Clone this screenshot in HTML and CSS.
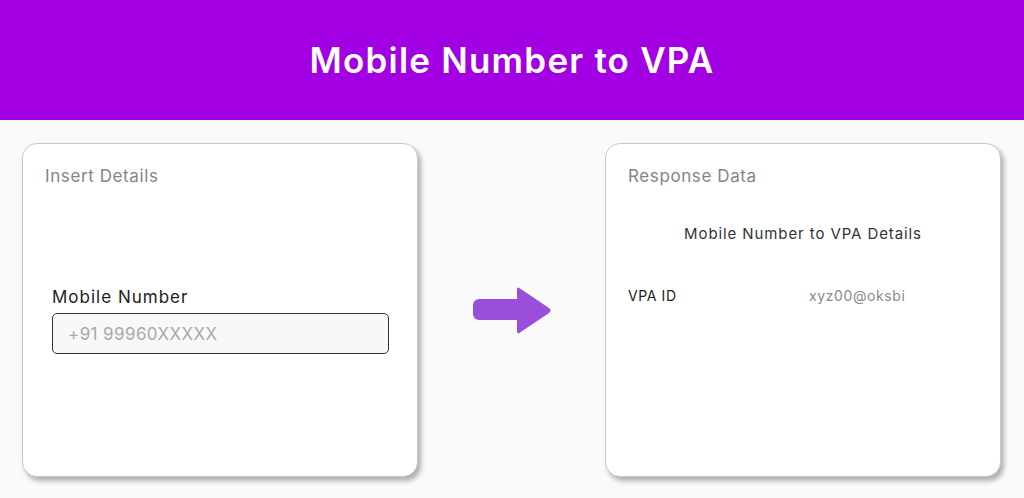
FILE: index.html
```html
<!DOCTYPE html>
<html lang="en">
<head>
<meta charset="utf-8">
<title>Mobile Number to VPA</title>
<link rel="stylesheet" href="styles.css">
</head>
<body>
<header class="banner">
  <h1 class="banner-title">Mobile Number to VPA</h1>
</header>
<main class="stage">
  <section class="card">
    <h2 class="card-title">Insert Details</h2>
    <div class="card-body card-body-form">
      <label class="field-label" for="mobile">Mobile Number</label>
      <input class="field-input" id="mobile" type="text" placeholder="+91 99960XXXXX">
    </div>
  </section>
  <div class="arrow" aria-hidden="true">
    <svg width="80" height="50" viewBox="0 0 80 50">
      <rect x="0" y="13" width="50" height="21" rx="6" fill="#9a4fdc"/>
      <path d="M44 4 Q44 0 47 2.5 L76 22 Q79 24.5 76 27 L47 46.5 Q44 49 44 45 Z" fill="#9a4fdc"/>
    </svg>
  </div>
  <section class="card">
    <h2 class="card-title">Response Data</h2>
    <div class="card-body">
      <h3 class="result-heading">Mobile Number to VPA Details</h3>
      <div class="result-row">
        <span class="result-key">VPA ID</span>
        <span class="result-value">xyz00@oksbi</span>
      </div>
    </div>
  </section>
</main>
</body>
</html>
```
FILE: styles.css
```css
* { box-sizing: border-box; }
html, body { margin: 0; padding: 0; }
body {
  font-family: "Inter", "Open Sans", sans-serif;
  background: #fafafa;
  width: 1024px;
  height: 498px;
  overflow: hidden;
}
.banner {
  height: 120px;
  background: #a200e3;
  display: flex;
  align-items: center;
  justify-content: center;
}
.banner-title {
  margin: 0;
  color: #fff;
  font-size: 35px;
  font-weight: 600;
  letter-spacing: 1.2px;
}
.stage {
  display: flex;
  align-items: center;
  justify-content: space-between;
  padding: 23px 23px 0 22px;
}
.card {
  width: 396px;
  height: 334px;
  background: #fff;
  border: 1px solid #c8c8c8;
  border-radius: 15px;
  box-shadow: 3px 4px 5px rgba(0,0,0,0.3);
  padding: 22px 22px;
  display: flex;
  flex-direction: column;
}
.card-title {
  margin: 0;
  font-size: 17px;
  font-weight: 400;
  color: #858585;
  letter-spacing: 0.6px;
}
.card-body {
  display: flex;
  flex-direction: column;
}
.card-body-form {
  padding: 101px 7px 0 7px;
}
.field-label {
  font-size: 17px;
  color: #222;
  margin-bottom: 6px;
  letter-spacing: 1px;
}
.field-input {
  width: 337px;
  height: 41px;
  border: 1px solid #333;
  border-radius: 5px;
  background: #f8f8f8;
  font: inherit;
  font-size: 17px;
  padding: 0 15px;
  color: #222;
  letter-spacing: 0.4px;
}
.field-input::placeholder { color: #aaa; }
.arrow {
  display: flex;
  margin-top: 2px;
  margin-left: 2px;
}
.result-heading {
  margin: 38px 0 0;
  text-align: center;
  font-size: 15px;
  font-weight: 400;
  color: #333;
  letter-spacing: 0.9px;
}
.result-row {
  display: grid;
  grid-template-columns: 181px 1fr;
  margin-top: 44px;
  font-size: 14px;
  letter-spacing: 0.6px;
}
.result-key { color: #222; }
.result-value { color: #8a8a8a; }
```
